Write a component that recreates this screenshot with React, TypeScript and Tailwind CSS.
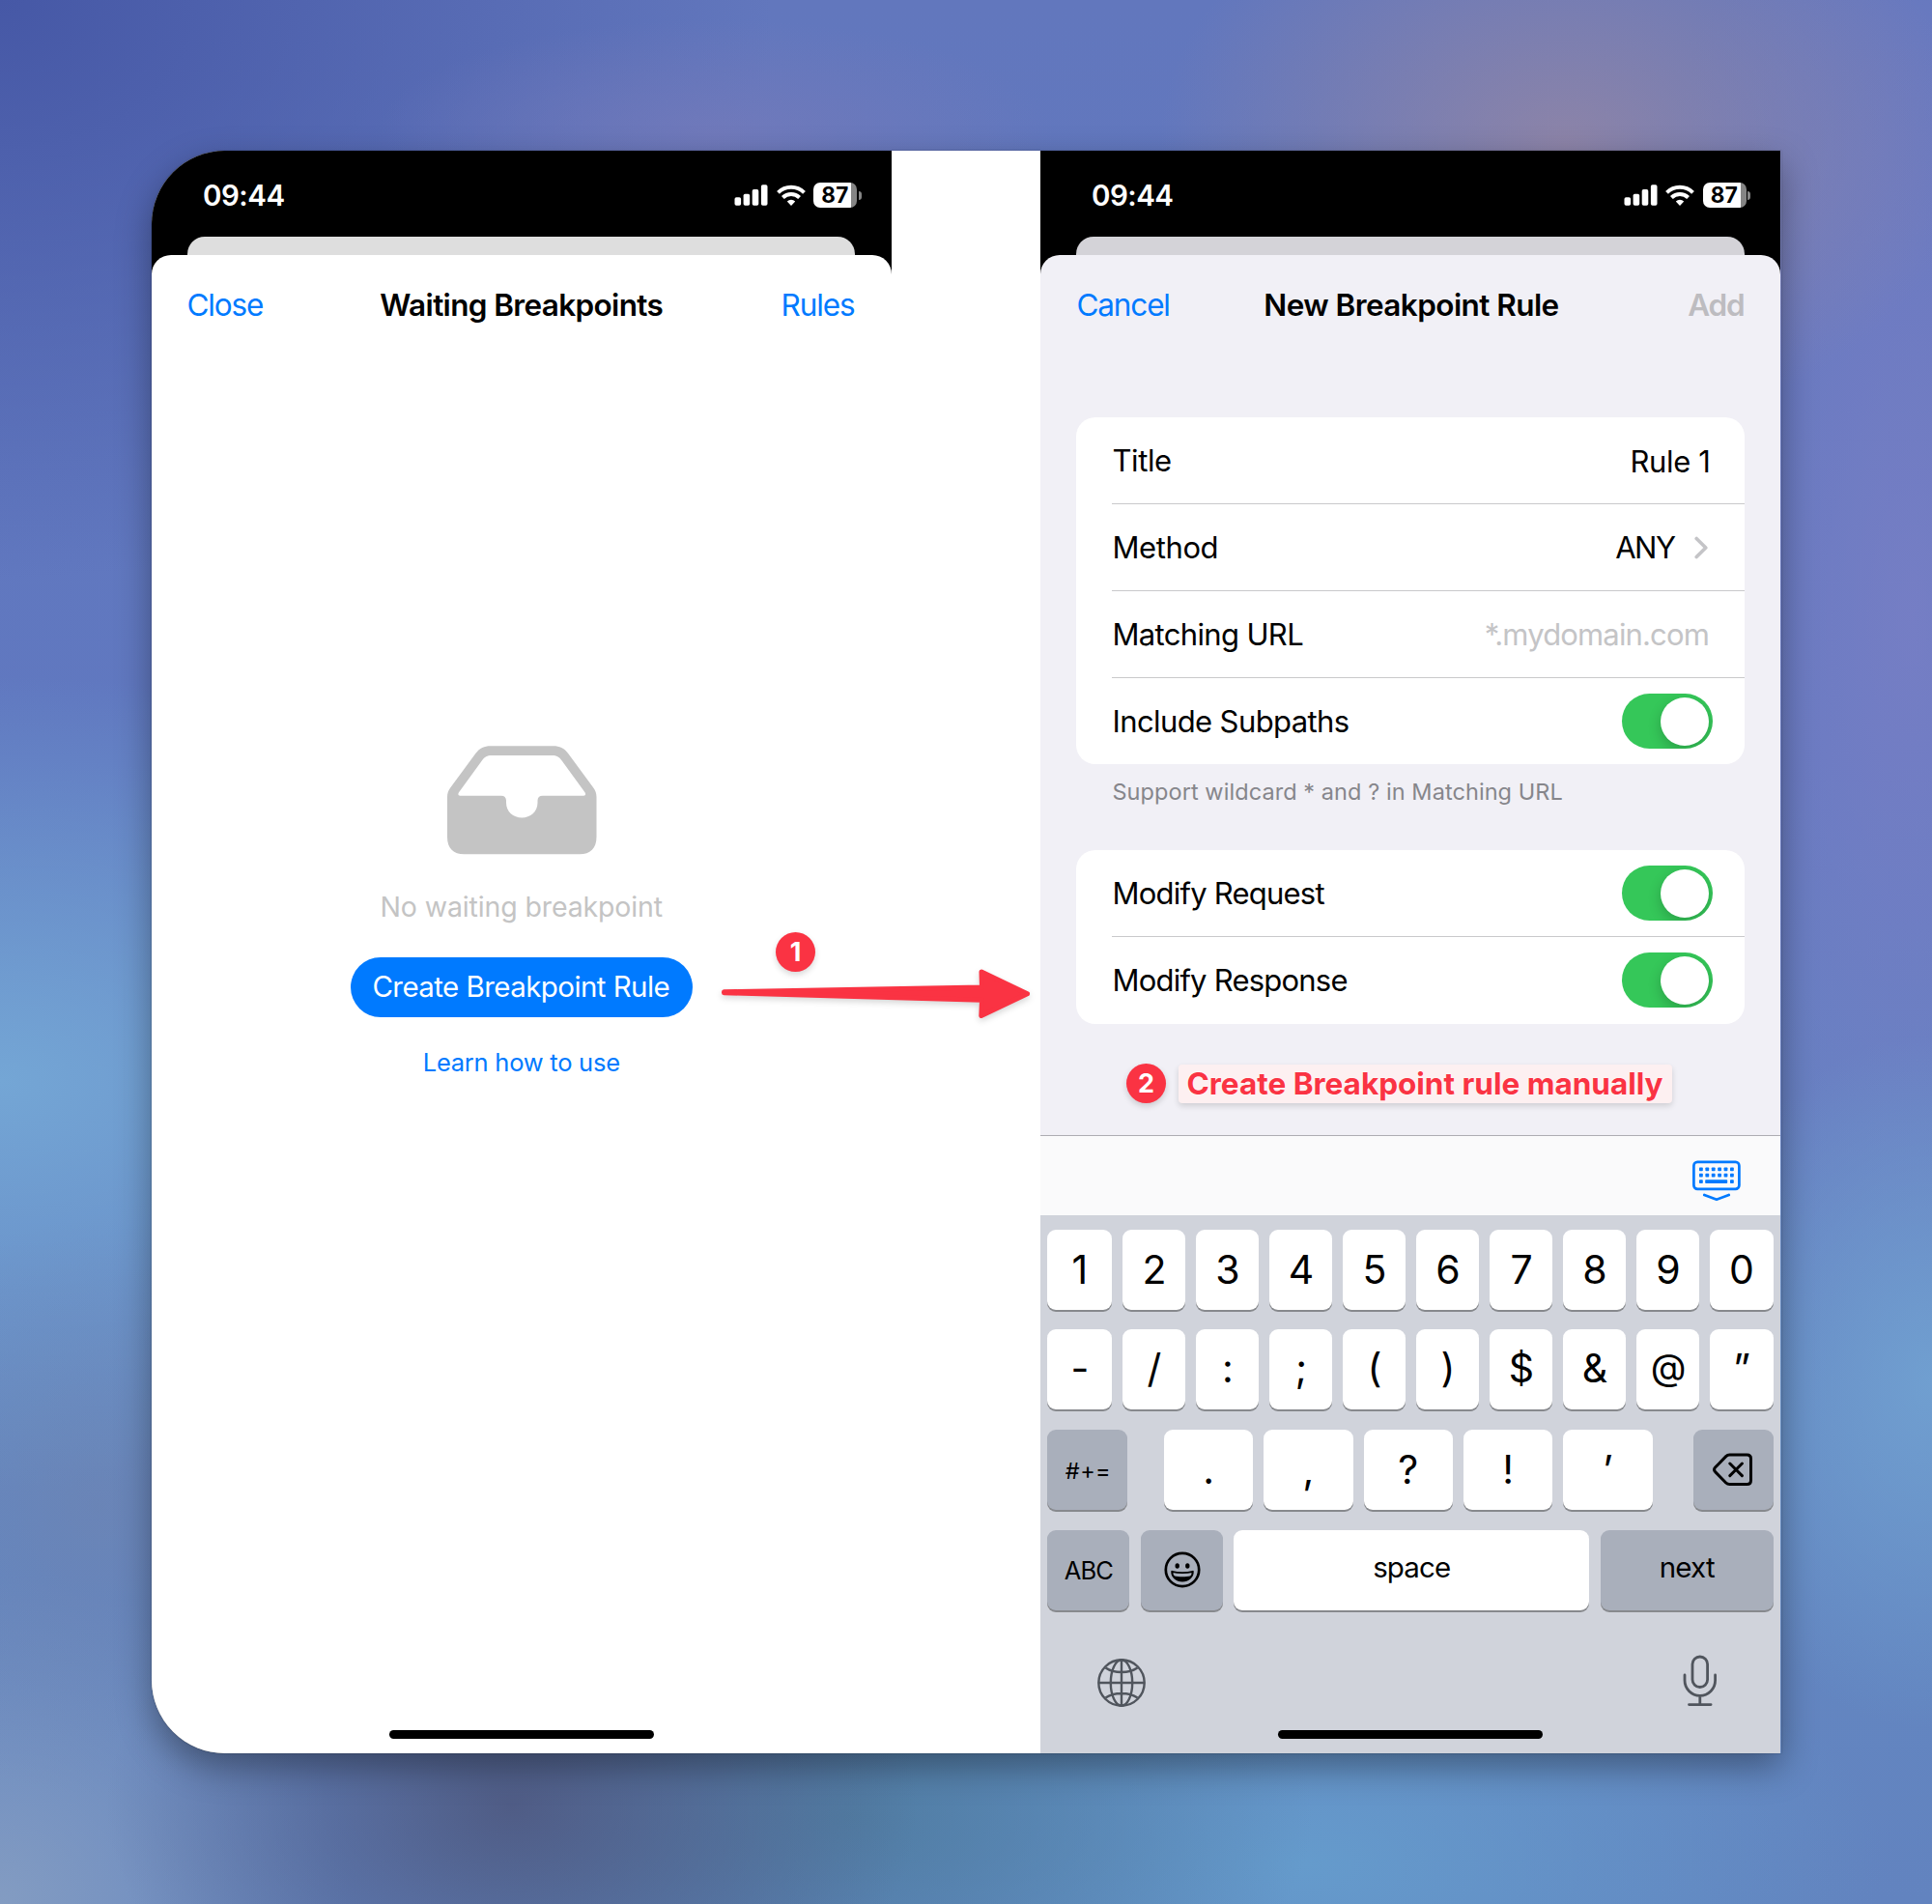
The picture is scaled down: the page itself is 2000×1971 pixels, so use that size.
import React from "react";

function SignalIcon() {
  return (
    <svg width="35" height="22" viewBox="0 0 35 22" fill="white">
      <rect x="0.5" y="13.2" width="6.6" height="8.6" rx="1.8" />
      <rect x="9.6" y="9.7" width="6.6" height="12.1" rx="1.8" />
      <rect x="18.7" y="5" width="6.6" height="16.8" rx="1.8" />
      <rect x="27.9" y="0.2" width="6.6" height="21.6" rx="1.8" />
    </svg>
  );
}

function WifiIcon() {
  return (
    <svg width="30" height="22" viewBox="0 0 30 22" fill="none" stroke="white" strokeWidth="4">
      <path d="M1.5 8.3a19.2 19.2 0 0 1 27 0" />
      <path d="M6.4 13.5a12.2 12.2 0 0 1 17.2 0" />
      <path d="M15 21.9l-4.2-4.5a6.2 6.2 0 0 1 8.4 0z" fill="white" stroke="none" />
    </svg>
  );
}

function Battery() {
  return (
    <div className="flex items-center">
      <div className="flex h-[26px] w-[45px] items-center justify-center overflow-hidden rounded-[7px] bg-[linear-gradient(to_right,#fff_39px,#858585_39px)]">
        <span className="text-[22.5px] leading-[26px] font-bold tracking-[0.4px] text-black">87</span>
      </div>
      <div className="ml-[1.5px] h-[9px] w-[3px] rounded-r-full bg-[#858585]" />
    </div>
  );
}

function StatusBar() {
  return (
    <div className="flex h-[89px] items-center justify-between pt-[3px] pr-[31px] pl-[53px]">
      <span className="text-[29.5px] leading-[36px] font-[560] tracking-[-0.5px] text-white">09:44</span>
      <div className="flex items-center">
        <SignalIcon />
        <span className="ml-[8.500px]">
          <WifiIcon />
        </span>
        <span className="ml-[8.5px]">
          <Battery />
        </span>
      </div>
    </div>
  );
}

function InboxIcon() {
  return (
    <svg width="155" height="113" viewBox="0 0 155 113" fill="#c4c4c4">
      <path
        fillRule="evenodd"
        d="M0 53c0-3.600 1-6.500 3.200-9.500L29.500 7.800C33.500 2.500 38.500 0.300 44.500 0.300h65.500c6 0 11 2.200 15 7.500l26.300 35.700c2.200 3 3.200 5.900 3.200 9.500v41.500c0 11.500-6.500 17.800-17.500 17.800H17.500C6.500 112.300 0 106 0 94.500zM12 48.300c-1.200 1.800-.6 3.400 1.300 3.400h42.500c3.300 0 5.200 1.900 5.200 5v2.200c0 9.200 7.300 15.500 16.250 15.500s16.250-6.300 16.250-15.500v-2.200c0-3.100 1.900-5 5.200-5h42.500c1.900 0 2.500-1.600 1.300-3.400L118.500 15.200c-2.700-3.700-5.300-5.200-9.800-5.200H45.800c-4.500 0-7.100 1.500-9.800 5.200z"
      />
    </svg>
  );
}

function WaitingPhone() {
  return (
    <section className="flex w-[766px] flex-col bg-[linear-gradient(to_bottom,#000_134px,#fff_134px)]">
      <StatusBar />
      <div className="mr-[37.500px] ml-[37px] h-[19px] rounded-t-[18px] bg-[#dedede]" />
      <div className="flex flex-1 flex-col items-center rounded-t-[20px] bg-white">
        <div className="flex h-[103px] w-full items-center justify-between pr-[38px] pl-[36.500px]">
          <span className="w-[120px] text-[31.5px] leading-[40px] tracking-[-1.15px] text-[#007aff]">Close</span>
          <span className="ml-[1.500px] text-[31.5px] leading-[40px] font-semibold tracking-[-0.64px] text-black">Waiting Breakpoints</span>
          <span className="w-[120px] text-right text-[31.5px] leading-[40px] tracking-[-1.1px] text-[#007aff]">Rules</span>
        </div>
        <div className="mt-[405px] ml-[1.500px]">
          <InboxIcon />
        </div>
        <p className="mt-[34px] text-[28.500px] leading-[40px] tracking-[-0.13px] text-[#c4c4c4]">No waiting breakpoint</p>
        <button className="mt-[31.500px] h-[62px] w-[354px] rounded-full bg-[#007aff] pr-[1px] text-[29.5px] leading-[61px] tracking-[-0.57px] text-white">
          Create Breakpoint Rule
        </button>
        <a className="mt-[32.500px] text-[25.5px] leading-[30px] tracking-[-0.25px] text-[#007aff]">Learn how to use</a>
        <div className="mt-auto mb-[15px] h-[9.500px] w-[274px] rounded-full bg-black" />
      </div>
    </section>
  );
}

function Toggle() {
  return (
    <span className="mr-[33px] flex h-[57px] w-[94px] items-center justify-end overflow-hidden rounded-full bg-[#35c759] pr-[3.500px]">
      <span className="h-[50px] w-[50px] rounded-full bg-white shadow-[0_5px_14px_rgba(0,0,0,0.2)]" />
    </span>
  );
}

function Row({ label, spacing, last, children }: { label: string; spacing: string; last?: boolean; children: React.ReactNode }) {
  return (
    <div className={`ml-[37px] flex flex-1 items-center justify-between ${last ? "" : "border-b-[1.500px] border-[#c9c9cb]"}`}>
      <span className={`text-[31px] leading-[39px] text-black ${spacing}`}>{label}</span>
      {children}
    </div>
  );
}

function KeyboardDismissIcon() {
  return (
    <svg width="50" height="43" viewBox="0 0 50 43" fill="#007aff">
      <rect x="1.400" y="1.900" width="47" height="28" rx="3.800" fill="none" stroke="#007aff" strokeWidth="2.700" />
      {[7, 13.4, 19.8, 26.2, 32.6, 39].map((x) => (
        <React.Fragment key={x}>
          <rect x={x} y="7.500" width="3.800" height="3.800" rx="0.800" />
          <rect x={x} y="13.800" width="3.800" height="3.800" rx="0.800" />
        </React.Fragment>
      ))}
      <rect x="7" y="20.200" width="3.800" height="3.800" rx="0.800" />
      <rect x="13.200" y="20.200" width="23" height="3.800" rx="0.800" />
      <rect x="39" y="20.200" width="3.800" height="3.800" rx="0.800" />
      <path d="M12.300 36l12.700 4.700L37.700 36" fill="none" stroke="#007aff" strokeWidth="2.700" strokeLinecap="round" strokeLinejoin="round" />
    </svg>
  );
}

function GrinIcon() {
  return (
    <svg width="38" height="38" viewBox="0 0 38 38">
      <circle cx="19" cy="19" r="17.200" fill="none" stroke="black" strokeWidth="2.700" />
      <ellipse cx="13.700" cy="15" rx="2.200" ry="2.700" />
      <ellipse cx="24.300" cy="15" rx="2.200" ry="2.700" />
      <path
        d="M8.200 20.800c3.500.9 7 1.300 10.800 1.300s7.300-.4 10.800-1.300c.2 5.700-4.800 9.800-10.800 9.800s-11-4.100-10.800-9.800z"
        fill="none"
        stroke="black"
        strokeWidth="1.900"
        strokeLinejoin="round"
      />
      <path d="M10 25.200c2.800.8 5.800 1.100 9 1.100s6.200-.3 9-1.100c-1.500 3.200-4.900 5.400-9 5.400s-7.500-2.200-9-5.400z" />
    </svg>
  );
}

function GlobeIcon() {
  return (
    <svg width="50" height="50" viewBox="0 0 50 50" fill="none" stroke="#50555d" strokeWidth="2.400">
      <circle cx="25" cy="25" r="23.700" />
      <ellipse cx="25" cy="25" rx="11.200" ry="23.700" />
      <path d="M25 1.300v47.400M1.300 25h47.400M8.500 9.500C12.500 12.300 18.500 14 25 14s12.500-1.700 16.500-4.500M8.500 40.500C12.500 37.700 18.500 36 25 36s12.500 1.700 16.500 4.500" />
    </svg>
  );
}

function MicIcon() {
  return (
    <svg width="36" height="54" viewBox="0 0 36 54" fill="none" stroke="#50555d" strokeWidth="2.800" strokeLinecap="round">
      <rect x="10" y="2" width="15.600" height="31.500" rx="7.800" />
      <path d="M2 21v5.500a15.800 15.800 0 0 0 31.600 0V21M17.800 42.500v9M6.500 51.600h22.600" />
    </svg>
  );
}

function DeleteIcon() {
  return (
    <svg width="42" height="35" viewBox="0 0 42 35" fill="none" stroke="black" strokeWidth="3" strokeLinecap="round" strokeLinejoin="round">
      <path d="M17.500 2h18c2.800 0 4 1.300 4 4v22.600c0 2.700-1.200 4-4 4h-18c-1.700 0-2.700-.5-3.800-1.600L2.600 19.600c-1.300-1.400-1.300-3.100 0-4.500L13.700 3.600C14.800 2.500 15.800 2 17.500 2z" />
      <path d="M17.800 11l12.600 12.600M30.400 11L17.800 23.600" />
    </svg>
  );
}

const keyBase = "flex h-[83px] items-center justify-center rounded-[9px] shadow-[0_2px_0_#87898d] text-black";

function Key({ children, className = "" }: { children: React.ReactNode; className?: string }) {
  return <div className={`${keyBase} bg-white text-[41px] leading-[50px] ${className}`}>{children}</div>;
}

function DarkKey({ children, className = "" }: { children: React.ReactNode; className?: string }) {
  return <div className={`${keyBase} bg-[#a9afbb] ${className}`}>{children}</div>;
}

function Keyboard() {
  return (
    <div className="flex flex-1 flex-col bg-[#d0d3db] pt-[14.500px]">
      <div className="flex flex-col gap-[20.800px] pr-[7.500px] pl-[7.500px]">
        <div className="grid grid-cols-[67px_repeat(9,1fr)] gap-[11px]">
          {["1", "2", "3", "4", "5", "6", "7", "8", "9", "0"].map((k) => (
            <Key key={k}>{k}</Key>
          ))}
        </div>
        <div className="grid grid-cols-[67px_repeat(9,1fr)] gap-[11px]">
          {["-", "/", ":", ";", "(", ")", "$", "&"].map((k) => (
            <Key key={k} className="pb-[3px]">
              {k}
            </Key>
          ))}
          <Key className="pb-[5px] !text-[38px]">@</Key>
          <Key className="pb-[3px]">”</Key>
        </div>
        <div className="flex">
          <DarkKey className="w-[83px] pt-[3px] pl-[1px] text-[23.5px] tracking-[0.4px]">#+=</DarkKey>
          <div className="ml-[37.500px] flex gap-[10.800px]">
            {[".", ",", "?", "!", "’"].map((k) => (
              <Key key={k} className="w-[92.500px] pb-[1px]">
                {k}
              </Key>
            ))}
          </div>
          <DarkKey className="ml-auto w-[83px]">
            <DeleteIcon />
          </DarkKey>
        </div>
        <div className="flex">
          <DarkKey className="w-[85px] pt-[2px] text-[25.5px] tracking-[-0.79px]">ABC</DarkKey>
          <DarkKey className="ml-[12px] w-[85px]">
            <GrinIcon />
          </DarkKey>
          <div className={`${keyBase} ml-[10.500px] w-[368.500px] bg-white text-[29.5px] tracking-[-0.9px]`}>
            <span className="-mt-[6px]">space</span>
          </div>
          <DarkKey className="ml-[11.500px] flex-1 text-[29.5px] tracking-[-0.78px]">
            <span className="-mt-[6px]">next</span>
          </DarkKey>
        </div>
      </div>
      <div className="mt-[46px] flex items-start justify-between pr-[65px] pl-[59px]">
        <span className="mt-[4px]">
          <GlobeIcon />
        </span>
        <MicIcon />
      </div>
      <div className="mt-auto mb-[15px] h-[9.500px] w-[274px] self-center rounded-full bg-black" />
    </div>
  );
}

function Badge({ children }: { children: React.ReactNode }) {
  return (
    <span className="flex h-[41px] w-[41px] items-center justify-center rounded-full bg-[#fa3343] text-[27px] leading-[41px] font-bold text-white shadow-[0_3px_6px_rgba(0,0,0,0.16)]">
      {children}
    </span>
  );
}

function RulePhone() {
  return (
    <section className="flex w-[766.500px] flex-col bg-black">
      <StatusBar />
      <div className="mx-[37.500px] h-[19px] rounded-t-[18px] bg-[#d4d3d8]" />
      <div className="flex flex-1 flex-col rounded-t-[20px] bg-[#f1f0f6]">
        <div className="flex h-[103px] items-center justify-between pr-[37.500px] pl-[37.500px]">
          <span className="w-[120px] text-[31.5px] leading-[40px] tracking-[-1.15px] text-[#007aff]">Cancel</span>
          <span className="ml-[2px] text-[31.5px] leading-[40px] font-semibold tracking-[-0.57px] text-black">New Breakpoint Rule</span>
          <span className="w-[120px] text-right text-[31.5px] leading-[40px] font-semibold tracking-[-1.2px] text-[#bdbcc0]">Add</span>
        </div>
        <div className="mx-[37.500px] mt-[65px] flex h-[359px] flex-col rounded-[20px] bg-white">
          <Row label="Title" spacing="tracking-[-0.39px]">
            <span className="mt-[2px] mr-[35px] text-[31px] leading-[40px] tracking-[-0.35px] text-black">Rule 1</span>
          </Row>
          <Row label="Method" spacing="tracking-[-0.4px]">
            <span className="flex items-center">
              <span className="text-[31px] leading-[39px] tracking-[-1.5px] text-black">ANY</span>
              <svg className="mr-[37px] ml-[19px]" width="16" height="24" viewBox="0 0 16 24" fill="none" stroke="#c4c4c7" strokeWidth="3.600" strokeLinecap="round" strokeLinejoin="round">
                <path d="M3.200 2.500l9.600 9.500-9.600 9.500" />
              </svg>
            </span>
          </Row>
          <Row label="Matching URL" spacing="tracking-[-0.65px]">
            <span className="mt-[1px] mr-[36.500px] text-[31px] leading-[40px] tracking-[-0.85px] text-[#c4c4c6]">*.mydomain.com</span>
          </Row>
          <Row label="Include Subpaths" spacing="tracking-[-0.6px]" last>
            <Toggle />
          </Row>
        </div>
        <p className="mt-[14px] ml-[74.500px] text-[23.5px] leading-[30px] tracking-[0.07px] text-[#86868b]">Support wildcard * and ? in Matching URL</p>
        <div className="mx-[37.500px] mt-[45px] flex h-[179.500px] flex-col rounded-[20px] bg-white">
          <Row label="Modify Request" spacing="tracking-[-0.77px]">
            <Toggle />
          </Row>
          <Row label="Modify Response" spacing="tracking-[-0.78px]" last>
            <Toggle />
          </Row>
        </div>
        <div className="mt-[41.500px] ml-[89px] flex items-center">
          <Badge>2</Badge>
          <span className="ml-[13.500px] h-[40px] w-[511px] rounded-[4px] bg-[#fdf0f1] px-[8px] text-[31.5px] leading-[40px] font-bold whitespace-nowrap text-[#fa3343] shadow-[0_3px_6px_rgba(0,0,0,0.14)] [text-shadow:0_0_2px_white]">
            Create Breakpoint rule manually
          </span>
        </div>
        <div className="mt-[33px] flex h-[83px] items-start justify-end border-t border-[#adadb2] bg-[#fafafb] pt-[24.500px] pr-[41.500px]">
          <KeyboardDismissIcon />
        </div>
        <Keyboard />
      </div>
    </section>
  );
}

export default function App() {
  return (
    <main className="relative flex h-[1971px] w-[2000px] overflow-hidden bg-[radial-gradient(ellipse_420px_300px_at_1620px_150px,rgba(148,134,164,0.85),transparent),radial-gradient(ellipse_350px_120px_at_740px_140px,rgba(116,122,186,0.8),transparent),radial-gradient(ellipse_260px_300px_at_100px_1560px,rgba(112,130,172,0.5),transparent),radial-gradient(ellipse_700px_420px_at_0px_1120px,#74a6d5,transparent),radial-gradient(ellipse_420px_280px_at_530px_1870px,rgba(78,88,128,0.9),transparent),radial-gradient(ellipse_480px_260px_at_880px_1880px,rgba(78,124,160,0.9),transparent),radial-gradient(ellipse_600px_300px_at_1350px_1930px,#659bcc,transparent),radial-gradient(ellipse_360px_340px_at_0px_1971px,#839cc2,transparent),radial-gradient(ellipse_260px_360px_at_2000px_1430px,#709fd0,transparent),radial-gradient(ellipse_300px_900px_at_1980px_640px,rgba(124,128,198,0.75),transparent),radial-gradient(ellipse_800px_600px_at_0px_0px,#4658a6,transparent),linear-gradient(to_bottom,#6277bd_0%,#6078c0_40%,#6488c2_75%,#6283bf_100%)] px-[157px] pt-[156px] font-['Inter',sans-serif]">
      <div className="flex h-[1659px] w-[1687px] overflow-hidden rounded-l-[76px] bg-white">
        <WaitingPhone />
        <div className="w-[154.500px]" />
        <RulePhone />
      </div>
      <div className="pointer-events-none absolute top-[156px] left-[157px] h-[1659px] w-[1687px] rounded-l-[76px] shadow-[0_14px_36px_rgba(0,0,0,0.36),0_0_2px_rgba(0,0,0,0.3)]" />
      <div className="absolute top-[965px] left-[803px]">
        <Badge>1</Badge>
      </div>
      <svg className="absolute top-[995px] left-[739.500px] drop-shadow-[0_3px_3px_rgba(0,0,0,0.16)]" width="335" height="66" viewBox="0 0 335 66" fill="#fa3343" stroke="#fa3343" strokeLinejoin="round" strokeWidth="5">
        <path d="M9.500 31.800L276.500 26.900 276 10.900 323.500 33.800 275.800 56.500 276.500 40.300 9.500 32.700z" />
      </svg>
    </main>
  );
}
